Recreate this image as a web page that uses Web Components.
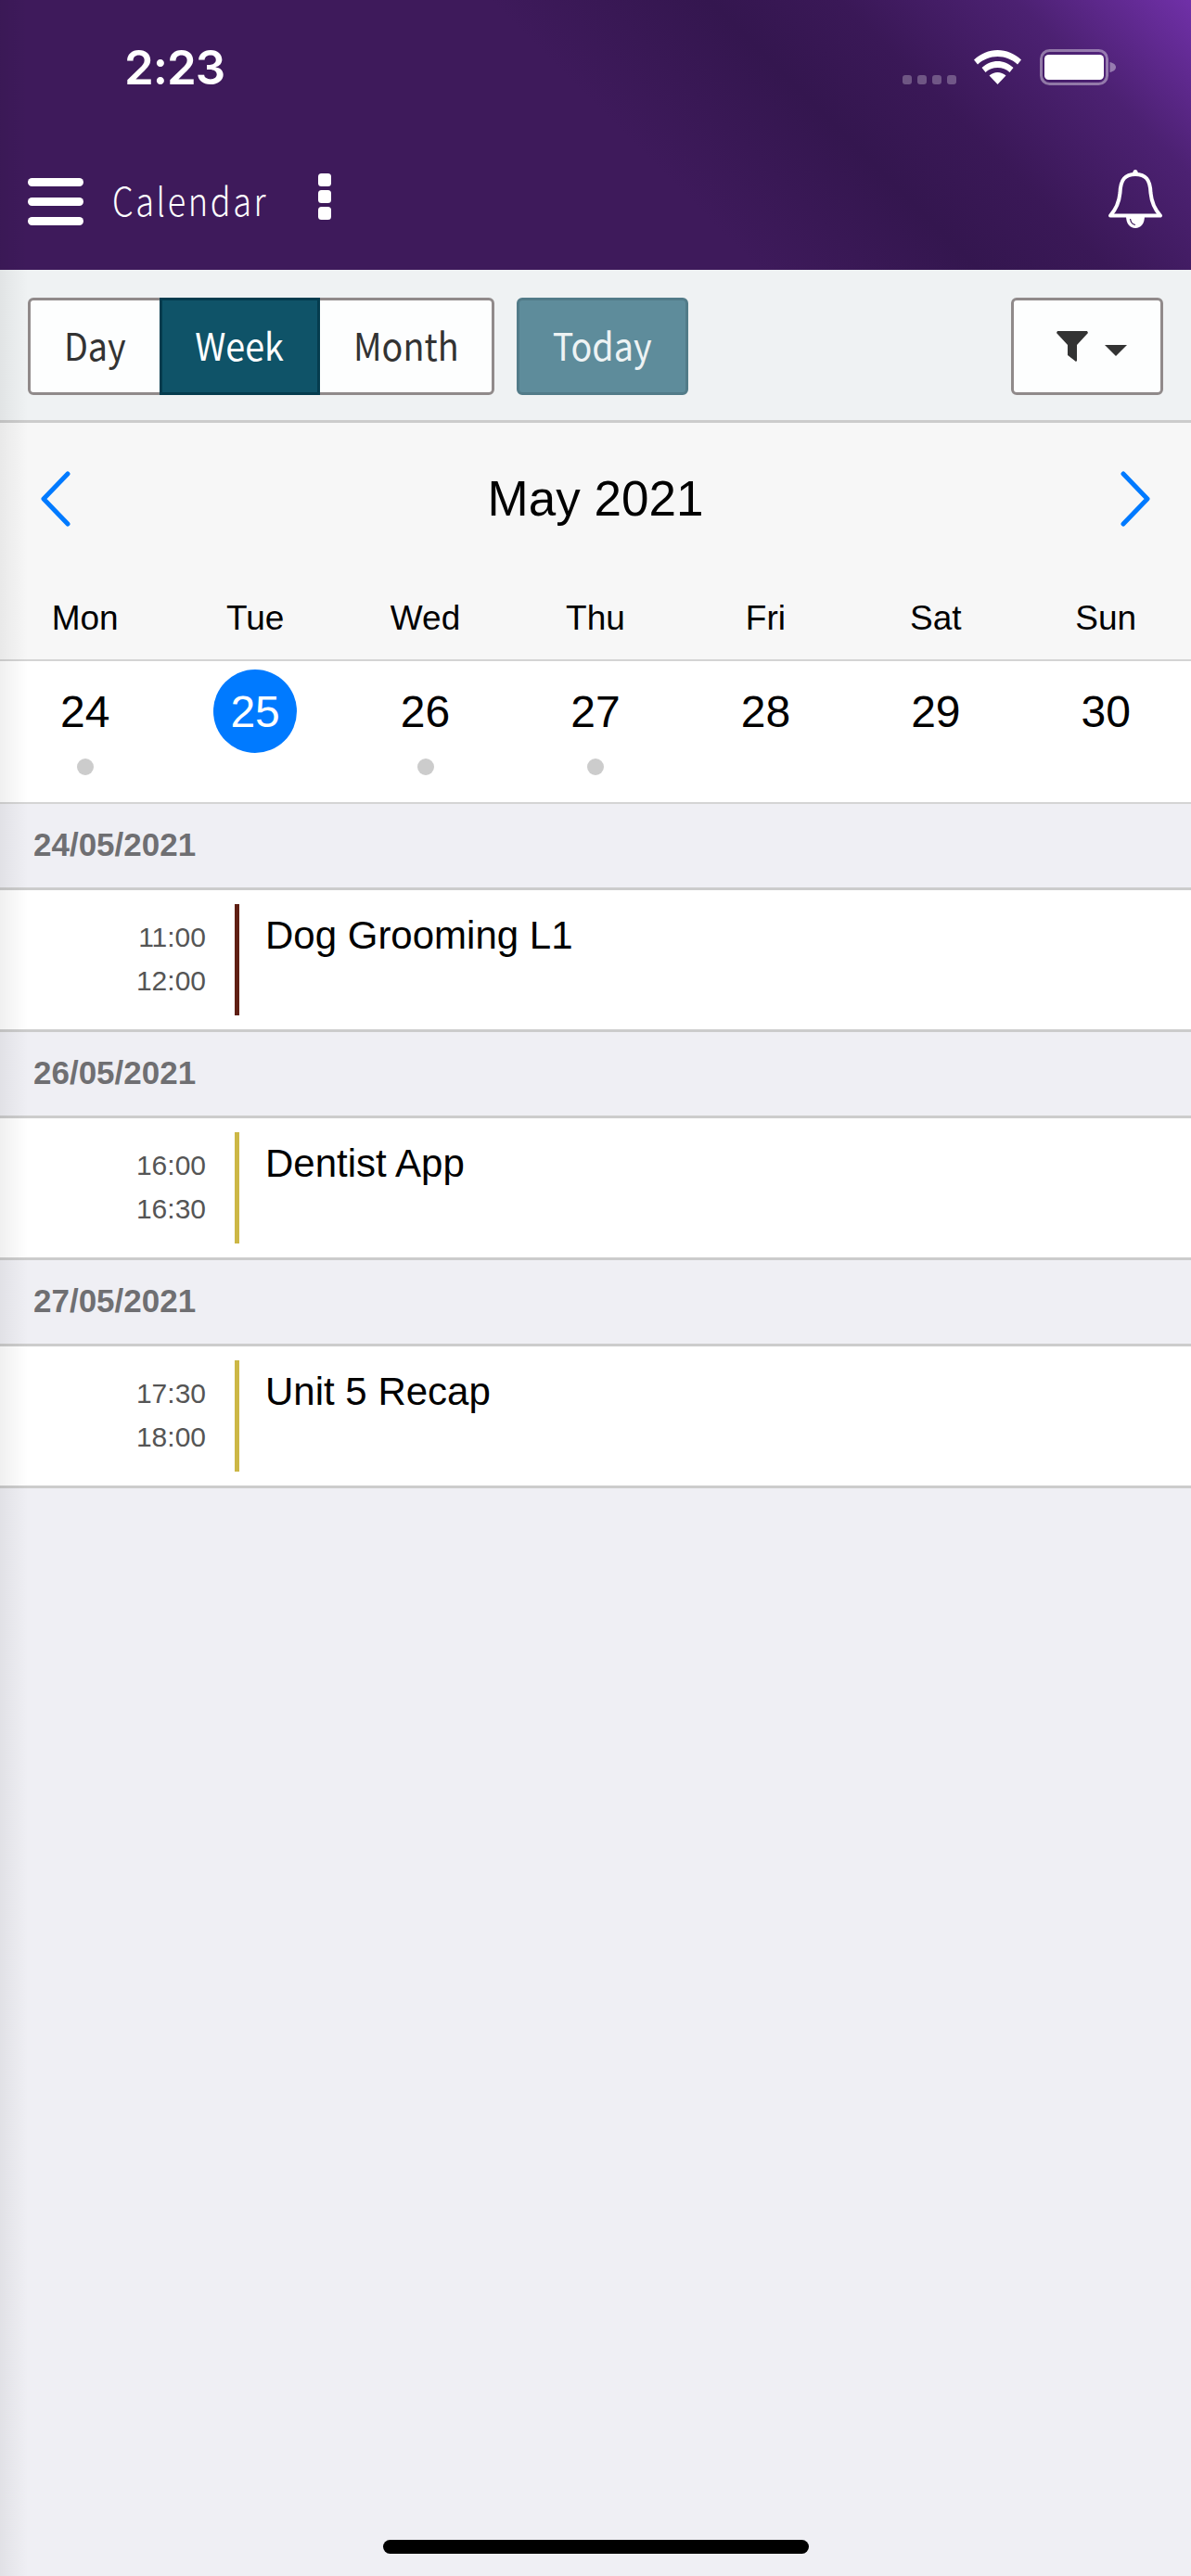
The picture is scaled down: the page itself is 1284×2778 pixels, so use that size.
<!DOCTYPE html>
<html>
<head>
<meta charset="utf-8">
<title>Calendar</title>
<style>
    html, body { margin: 0; padding: 0; }
    body {
        width: 1284px;
        height: 2778px;
        overflow: hidden;
        background: #efeff4;
        position: relative;
        font-family: "Liberation Sans", Arial, sans-serif;
    }
    /* side drawer shadow, lies over everything */
    #edge {
        position: absolute;
        left: 0;
        top: 0;
        width: 30px;
        height: 100%;
        background: linear-gradient(to right, rgba(0,0,0,0.06), rgba(0,0,0,0));
        pointer-events: none;
    }
</style>
</head>
<body>
<app-header title-text="Calendar"></app-header>
<view-toolbar></view-toolbar>
<month-nav>May 2021</month-nav>
<week-strip days="Mon,Tue,Wed,Thu,Fri,Sat,Sun">
    <day-cell dot>24</day-cell>
    <day-cell selected>25</day-cell>
    <day-cell dot>26</day-cell>
    <day-cell dot>27</day-cell>
    <day-cell>28</day-cell>
    <day-cell>29</day-cell>
    <day-cell>30</day-cell>
</week-strip>
<agenda-day date="24/05/2021">
    <agenda-item start="11:00" end="12:00" color="#5f1f14">Dog Grooming L1</agenda-item>
</agenda-day>
<agenda-day date="26/05/2021">
    <agenda-item start="16:00" end="16:30" color="#ccb746">Dentist App</agenda-item>
</agenda-day>
<agenda-day date="27/05/2021">
    <agenda-item start="17:30" end="18:00" color="#ccb746">Unit 5 Recap</agenda-item>
</agenda-day>
<home-indicator></home-indicator>
<div id="edge"></div>

<script>
    const SOURCE_FONT = `"Noto Sans CJK JP", "Noto Sans", sans-serif`;

    class AppHeader extends HTMLElement {
        constructor() {
            super();
            this.attachShadow({ mode: "open" });
            this.shadowRoot.innerHTML = `
                <style>
                    :host {
                        display: block;
                        height: 291px;
                        box-sizing: border-box;
                        color: #fff;
                        background: linear-gradient(45deg, #3e1a5b 0%, #3e1a5b 52%, #34164f 67%, #3a1857 76%, #4c2172 88%, #7030a8 100%);
                    }
                    .status {
                        display: flex;
                        align-items: flex-start;
                        height: 183px;
                        padding: 53px 0 0 134px;
                        box-sizing: border-box;
                    }
                    .time {
                        font: 600 51px/39px Inter, sans-serif;
                        letter-spacing: -1px;
                        width: 839px;
                    }
                    .signal {
                        display: flex;
                        gap: 6px;
                        margin-top: 28px;
                        width: 77px;
                    }
                    .signal i {
                        width: 10px;
                        height: 10px;
                        border-radius: 3px;
                        background: rgba(255,255,255,0.27);
                    }
                    .wifi { width: 51px; height: 37px; margin: 1px 20px 0 0; }
                    .battery { width: 82px; height: 39px; }
                    .bar {
                        display: flex;
                        align-items: flex-start;
                        height: 108px;
                        padding-left: 30px;
                    }
                    .burger { width: 60px; height: 51px; margin: 9px 31px 0 0; }
                    .title-box { width: 222px; margin-top: 8px; }
                    .title {
                        display: inline-block;
                        font: 300 42px/48px ${SOURCE_FONT};
                        letter-spacing: 3px;
                        white-space: nowrap;
                        transform: scaleX(0.86);
                        transform-origin: left center;
                    }
                    .kebab { width: 14px; height: 50px; margin-top: 4px; }
                    .bell { width: 58px; height: 63px; margin-left: auto; margin-right: 31px; }
                </style>
                <div class="status">
                    <div class="time">2:23</div>
                    <div class="signal"><i></i><i></i><i></i><i></i></div>
                    <svg class="wifi" viewBox="0 0 51 37">
                        <path fill="#fff" d="M25.5 0C16 0 7.5 3.7 0 10.5L4 15.5C10 10 17.5 7 25.5 7S41 10 47 15.5L51 10.5C43.5 3.7 35 0 25.5 0Z"/>
                        <path fill="#fff" d="M25.5 12C19.5 12 13.5 14.5 8.5 19L12.5 24C16 20.8 20.5 19 25.5 19S35 20.8 38.5 24L42.5 19C37.5 14.5 31.5 12 25.5 12Z"/>
                        <path fill="#fff" d="M25.5 24C22.3 24 19.2 25.2 16.5 27.5L25.5 37L34.5 27.5C31.8 25.2 28.7 24 25.5 24Z"/>
                    </svg>
                    <svg class="battery" viewBox="0 0 82 39">
                        <rect x="1.5" y="1.5" width="71" height="36" rx="9" fill="none" stroke="#fff" stroke-opacity="0.4" stroke-width="3"/>
                        <rect x="5" y="6" width="64" height="27" rx="4.5" fill="#fff"/>
                        <path d="M75.5 14C78.5 14.5 82 16.5 82 19.5S78.5 24.5 75.5 25Z" fill="#fff" fill-opacity="0.4"/>
                    </svg>
                </div>
                <div class="bar">
                    <svg class="burger" viewBox="0 0 60 51">
                        <rect x="0" y="0" width="60" height="9" rx="4.5" fill="#fff"/>
                        <rect x="0" y="21" width="60" height="9" rx="4.5" fill="#fff"/>
                        <rect x="0" y="42" width="60" height="9" rx="4.5" fill="#fff"/>
                    </svg>
                    <div class="title-box"><span class="title"></span></div>
                    <svg class="kebab" viewBox="0 0 14 50">
                        <rect x="0" y="0" width="14" height="14" rx="3.5" fill="#fff"/>
                        <rect x="0" y="18" width="14" height="14" rx="3.5" fill="#fff"/>
                        <rect x="0" y="36" width="14" height="14" rx="3.5" fill="#fff"/>
                    </svg>
                    <svg class="bell" viewBox="0 0 58 63">
                        <path fill="none" stroke="#fff" stroke-width="4" stroke-linejoin="round" d="M2 49.5C8 43 11.5 35 12.5 25C13 10.5 18 5 29 5S45 10.5 45.5 25C46.5 35 50 43 56 49.5Z"/>
                        <path fill="#fff" d="M26 4.5C26 2 27.3 0 29 0S32 2 32 4.5Z"/>
                        <path fill="#fff" d="M19 50H39C39 58 35 63 29 63S19 58 19 50Z"/>
                        <path fill="none" stroke="#3d1a5a" stroke-width="1.2" d="M23.5 53C24 56.5 26 59 29 59.5"/>
                    </svg>
                </div>
            `;
            this.shadowRoot.querySelector(".title").textContent = this.getAttribute("title-text");
        }
    }

    class ViewToolbar extends HTMLElement {
        constructor() {
            super();
            this.attachShadow({ mode: "open" });
            this.shadowRoot.innerHTML = `
                <style>
                    :host {
                        display: flex;
                        align-items: flex-start;
                        height: 165px;
                        box-sizing: border-box;
                        padding: 30px 30px 0;
                        background: #eff2f3;
                        border-bottom: 3px solid #ccc;
                        font: 400 41px/95px ${SOURCE_FONT};
                        color: #333;
                    }
                    b {
                        display: inline-block;
                        font-weight: 400;
                        transform: scaleX(0.92);
                    }
                    .seg {
                        display: flex;
                        height: 105px;
                        width: 503px;
                        box-sizing: border-box;
                        background: #fdfefe;
                        border: 3px solid #908a8a;
                        border-radius: 6px;
                    }
                    .seg span { text-align: center; }
                    .day { width: 139px; }
                    .week {
                        width: 173px;
                        height: 105px;
                        margin-top: -3px;
                        box-sizing: border-box;
                        background: #0f5368;
                        border: 3px solid #053c4e;
                        color: #fff;
                    }
                    .month { flex: 1; }
                    .today {
                        width: 185px;
                        height: 105px;
                        margin-left: 24px;
                        box-sizing: border-box;
                        text-align: center;
                        background: #5e8c9b;
                        border: 3px solid #527b88;
                        border-radius: 6px;
                        color: #eef3f4;
                    }
                    .filter {
                        display: flex;
                        align-items: flex-start;
                        width: 164px;
                        height: 105px;
                        margin-left: auto;
                        box-sizing: border-box;
                        background: #fdfefe;
                        border: 3px solid #908a8a;
                        border-radius: 6px;
                    }
                    .funnel { width: 34px; height: 33px; margin: 33px 0 0 46px; }
                    .caret { width: 24px; height: 12px; margin: 48px 0 0 18px; }
                </style>
                <div class="seg">
                    <span class="day"><b>Day</b></span>
                    <span class="week"><b>Week</b></span>
                    <span class="month"><b>Month</b></span>
                </div>
                <div class="today"><b>Today</b></div>
                <div class="filter">
                    <svg class="funnel" viewBox="0 0 34 33"><path fill="#333" d="M1 0H33L34 2L22 15V32L21 33L12 26V15L0 2Z"/></svg>
                    <svg class="caret" viewBox="0 0 24 12"><path fill="#333" d="M0 0H24L12 12Z"/></svg>
                </div>
            `;
        }
    }

    class MonthNav extends HTMLElement {
        constructor() {
            super();
            this.attachShadow({ mode: "open" });
            this.shadowRoot.innerHTML = `
                <style>
                    :host {
                        display: flex;
                        align-items: center;
                        justify-content: space-between;
                        height: 163px;
                        box-sizing: border-box;
                        padding: 0 44px;
                        background: #f7f7f7;
                        color: #000;
                        font: 400 53px/64px "Liberation Sans", Arial, sans-serif;
                    }
                    svg { width: 32px; height: 60px; display: block; }
                </style>
                <svg viewBox="0 0 32 60"><path fill="none" stroke="#007aff" stroke-width="5" stroke-linecap="round" stroke-linejoin="round" d="M29 3L3 30L29 57"/></svg>
                <slot></slot>
                <svg viewBox="0 0 32 60"><path fill="none" stroke="#007aff" stroke-width="5" stroke-linecap="round" stroke-linejoin="round" d="M3 3L29 30L3 57"/></svg>
            `;
        }
    }

    class WeekStrip extends HTMLElement {
        constructor() {
            super();
            this.attachShadow({ mode: "open" });
            const labels = this.getAttribute("days")
                .split(",")
                .map((day) => `<span>${day}</span>`)
                .join("");
            this.shadowRoot.innerHTML = `
                <style>
                    :host {
                        display: block;
                        color: #000;
                        border-bottom: 2px solid #d4d4d4;
                    }
                    .labels, .cells {
                        display: grid;
                        grid-template-columns: repeat(7, 1fr);
                    }
                    .labels {
                        height: 94px;
                        box-sizing: border-box;
                        padding-top: 27px;
                        background: #f7f7f7;
                        border-bottom: 2px solid #d4d4d4;
                        font: 400 37px/42px "Liberation Sans", Arial, sans-serif;
                        text-align: center;
                    }
                    .cells { height: 152px; background: #fff; }
                </style>
                <div class="labels">${labels}</div>
                <div class="cells"><slot></slot></div>
            `;
        }
    }

    class DayCell extends HTMLElement {
        constructor() {
            super();
            this.attachShadow({ mode: "open" });
            this.shadowRoot.innerHTML = `
                <style>
                    :host {
                        display: flex;
                        flex-direction: column;
                        align-items: center;
                        padding-top: 9px;
                        font: 400 48px/92px "Liberation Sans", Arial, sans-serif;
                        color: #000;
                    }
                    .num { width: 90px; height: 90px; border-radius: 50%; text-align: center; }
                    :host([selected]) .num { background: #007aff; color: #fff; }
                    .dot {
                        width: 18px;
                        height: 18px;
                        margin-top: 6px;
                        border-radius: 50%;
                        background: #ccc;
                        visibility: hidden;
                    }
                    :host([dot]) .dot { visibility: visible; }
                </style>
                <div class="num"><slot></slot></div>
                <div class="dot"></div>
            `;
        }
    }

    class AgendaDay extends HTMLElement {
        constructor() {
            super();
            this.attachShadow({ mode: "open" });
            this.shadowRoot.innerHTML = `
                <style>
                    :host { display: block; }
                    .date {
                        height: 93px;
                        box-sizing: border-box;
                        padding: 24px 0 0 36px;
                        background: #efeff4;
                        border-bottom: 3px solid #ccc;
                        color: #6f6f72;
                        font: 700 35px/40px "Liberation Sans", Arial, sans-serif;
                    }
                </style>
                <div class="date"></div>
                <slot></slot>
            `;
            this.shadowRoot.querySelector(".date").textContent = this.getAttribute("date");
        }
    }

    class AgendaItem extends HTMLElement {
        constructor() {
            super();
            this.attachShadow({ mode: "open" });
            this.shadowRoot.innerHTML = `
                <style>
                    :host {
                        display: flex;
                        align-items: flex-start;
                        height: 153px;
                        box-sizing: border-box;
                        padding-top: 15px;
                        background: #fff;
                        border-bottom: 3px solid #ccc;
                    }
                    .times {
                        width: 222px;
                        padding-top: 12px;
                        text-align: right;
                        color: #555;
                        font: 400 30px/47px "Liberation Sans", Arial, sans-serif;
                    }
                    .rule { width: 5px; height: 120px; margin-left: 31px; }
                    .title {
                        margin-left: 28px;
                        padding-top: 11px;
                        color: #000;
                        font: 400 42px/46px "Liberation Sans", Arial, sans-serif;
                    }
                </style>
                <div class="times"><div class="start"></div><div class="end"></div></div>
                <div class="rule"></div>
                <div class="title"><slot></slot></div>
            `;
            this.shadowRoot.querySelector(".start").textContent = this.getAttribute("start");
            this.shadowRoot.querySelector(".end").textContent = this.getAttribute("end");
            this.shadowRoot.querySelector(".rule").style.background = this.getAttribute("color");
        }
    }

    class HomeIndicator extends HTMLElement {
        constructor() {
            super();
            this.attachShadow({ mode: "open" });
            this.shadowRoot.innerHTML = `
                <style>
                    :host {
                        /* sits over the page, pinned to the bottom of the device */
                        position: absolute;
                        left: 413px;
                        top: 2739px;
                        width: 459px;
                        height: 15px;
                        border-radius: 8px;
                        background: #000;
                    }
                </style>
            `;
        }
    }

    window.customElements.define("app-header", AppHeader);
    window.customElements.define("view-toolbar", ViewToolbar);
    window.customElements.define("month-nav", MonthNav);
    window.customElements.define("week-strip", WeekStrip);
    window.customElements.define("day-cell", DayCell);
    window.customElements.define("agenda-day", AgendaDay);
    window.customElements.define("agenda-item", AgendaItem);
    window.customElements.define("home-indicator", HomeIndicator);
</script>
</body>
</html>
